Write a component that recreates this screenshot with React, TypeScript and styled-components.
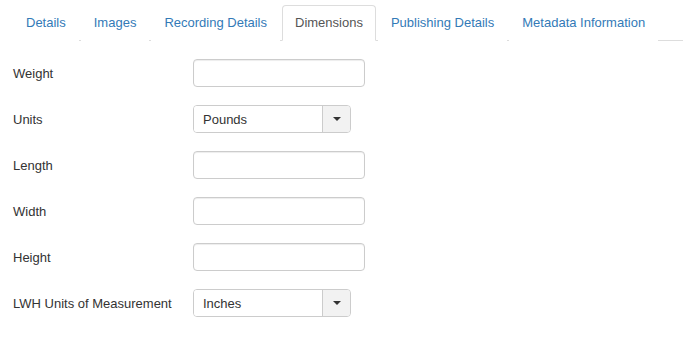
import React from "react";
import styled, { createGlobalStyle } from "styled-components";

const Global = createGlobalStyle`
  html, body { margin: 0; padding: 0; background: #fff; }
  body { font-family: "Liberation Sans", Arial, sans-serif; font-size: 13px; color: #333; }
`;

const Page = styled.div`
  padding: 5px 0 0 13px;
`;

const TabBar = styled.ul`
  display: flex;
  list-style: none;
  margin: 0;
  padding: 0;
  border-bottom: 1px solid #ddd;
`;

const TabItem = styled.li`
  margin: 0 2px -1px 0;
`;

const TabLink = styled.a<{ $active?: boolean }>`
  display: block;
  padding: 8px 12px;
  line-height: 18px;
  border: 1px solid ${(p) => (p.$active ? "#ddd" : "transparent")};
  border-bottom-color: ${(p) => (p.$active ? "#fff" : "transparent")};
  border-radius: 4px 4px 0 0;
  background: #fff;
  color: ${(p) => (p.$active ? "#555" : "#337ab7")};
  text-decoration: none;
  cursor: pointer;
`;

const Form = styled.div`
  display: flex;
  flex-direction: column;
  gap: 18px;
  padding-top: 18px;
`;

const Row = styled.div`
  display: grid;
  grid-template-columns: 180px auto;
  align-items: center;
`;

const Label = styled.label`
  color: #333;
`;

const TextInput = styled.input`
  box-sizing: border-box;
  width: 172px;
  height: 28px;
  border: 1px solid #ccc;
  border-radius: 4px;
  padding: 0 9px;
  font: inherit;
  box-shadow: inset 0 1px 1px rgba(0, 0, 0, 0.075);
`;

const Select = styled.div`
  box-sizing: border-box;
  display: flex;
  width: 158px;
  height: 28px;
  border: 1px solid #ccc;
  border-radius: 4px;
  overflow: hidden;
`;

const SelectValue = styled.div`
  flex: 1;
  display: flex;
  align-items: center;
  padding-left: 9px;
  color: #333;
  background: #fff;
`;

const SelectButton = styled.div`
  width: 27px;
  display: flex;
  align-items: center;
  justify-content: center;
  background: #f2f2f2;
  border-left: 1px solid #ccc;
`;

const Caret = styled.span`
  width: 0;
  height: 0;
  border-left: 4px solid transparent;
  border-right: 4px solid transparent;
  border-top: 4px solid #333;
`;

const tabs = [
  "Details",
  "Images",
  "Recording Details",
  "Dimensions",
  "Publishing Details",
  "Metadata Information",
];

type Field = { label: string; select?: string };
const fields: Field[] = [
  { label: "Weight" },
  { label: "Units", select: "Pounds" },
  { label: "Length" },
  { label: "Width" },
  { label: "Height" },
  { label: "LWH Units of Measurement", select: "Inches" },
];

export default function App() {
  return (
    <Page>
      <Global />
      <TabBar>
        {tabs.map((t) => (
          <TabItem key={t}>
            <TabLink $active={t === "Dimensions"}>{t}</TabLink>
          </TabItem>
        ))}
      </TabBar>
      <Form>
        {fields.map((f) => (
          <Row key={f.label}>
            <Label>{f.label}</Label>
            {f.select ? (
              <Select>
                <SelectValue>{f.select}</SelectValue>
                <SelectButton>
                  <Caret />
                </SelectButton>
              </Select>
            ) : (
              <TextInput type="text" />
            )}
          </Row>
        ))}
      </Form>
    </Page>
  );
}
